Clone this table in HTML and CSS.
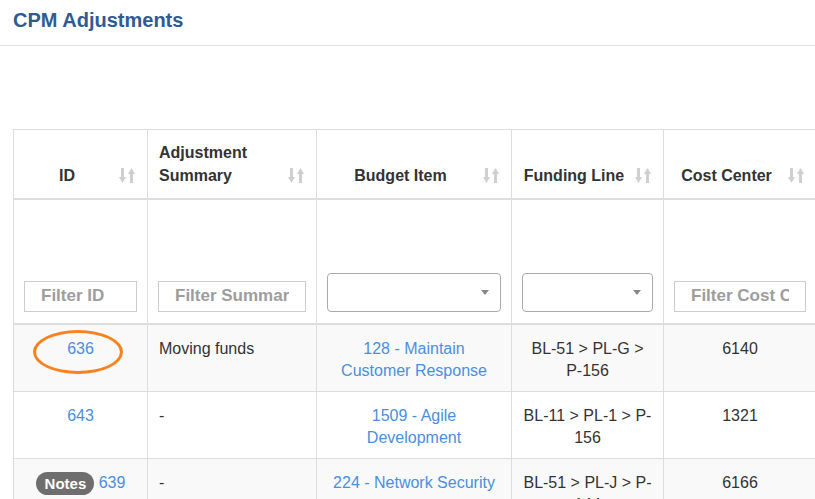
FILE: index.html
```html
<!DOCTYPE html>
<html lang="en">
<head>
  <meta charset="UTF-8">
  <meta name="viewport" content="width=device-width, initial-scale=1.0">
  <title>CPM Adjustments</title>
  <link rel="stylesheet" href="styles.css">
</head>
<body>
  <div class="page-header">
    <h1>CPM Adjustments</h1>
  </div>

  <table class="grid">
    <colgroup>
      <col class="col-id">
      <col class="col-summary">
      <col class="col-budget">
      <col class="col-funding">
      <col class="col-cost">
    </colgroup>
    <thead>
      <tr class="head-row">
        <th>
          <div class="th-inner"><span class="th-label">ID</span>
            <svg class="sort" viewBox="0 0 16 17" width="16" height="17"><rect x="2" y="1" width="3" height="10"/><polygon points="0,10 7,10 3.5,16"/><polygon points="9,7 16,7 12.5,1"/><rect x="11" y="6" width="3" height="10"/></svg>
          </div>
        </th>
        <th>
          <div class="th-inner"><span class="th-label left">Adjustment Summary</span>
            <svg class="sort" viewBox="0 0 16 17" width="16" height="17"><rect x="2" y="1" width="3" height="10"/><polygon points="0,10 7,10 3.5,16"/><polygon points="9,7 16,7 12.5,1"/><rect x="11" y="6" width="3" height="10"/></svg>
          </div>
        </th>
        <th>
          <div class="th-inner"><span class="th-label">Budget Item</span>
            <svg class="sort" viewBox="0 0 16 17" width="16" height="17"><rect x="2" y="1" width="3" height="10"/><polygon points="0,10 7,10 3.5,16"/><polygon points="9,7 16,7 12.5,1"/><rect x="11" y="6" width="3" height="10"/></svg>
          </div>
        </th>
        <th>
          <div class="th-inner"><span class="th-label">Funding Line</span>
            <svg class="sort" viewBox="0 0 16 17" width="16" height="17"><rect x="2" y="1" width="3" height="10"/><polygon points="0,10 7,10 3.5,16"/><polygon points="9,7 16,7 12.5,1"/><rect x="11" y="6" width="3" height="10"/></svg>
          </div>
        </th>
        <th>
          <div class="th-inner"><span class="th-label">Cost Center</span>
            <svg class="sort" viewBox="0 0 16 17" width="16" height="17"><rect x="2" y="1" width="3" height="10"/><polygon points="0,10 7,10 3.5,16"/><polygon points="9,7 16,7 12.5,1"/><rect x="11" y="6" width="3" height="10"/></svg>
          </div>
        </th>
      </tr>
      <tr class="filter-row">
        <td><input class="filter-input" type="text" placeholder="Filter ID"></td>
        <td><input class="filter-input" type="text" placeholder="Filter Summary"></td>
        <td>
          <div class="select-box">
            <svg viewBox="0 0 8 5" width="8" height="5"><polygon points="0,0 8,0 4,5"/></svg>
          </div>
        </td>
        <td>
          <div class="select-box">
            <svg viewBox="0 0 8 5" width="8" height="5"><polygon points="0,0 8,0 4,5"/></svg>
          </div>
        </td>
        <td><input class="filter-input" type="text" placeholder="Filter Cost Center"></td>
      </tr>
    </thead>
    <tbody>
      <tr>
        <td class="center"><a href="#" class="circled">636</a></td>
        <td>Moving funds</td>
        <td class="center"><a href="#">128 - Maintain Customer Response</a></td>
        <td class="center">BL-51 &gt; PL-G &gt; P-156</td>
        <td class="center">6140</td>
      </tr>
      <tr>
        <td class="center"><a href="#">643</a></td>
        <td>-</td>
        <td class="center"><a href="#">1509 - Agile Development</a></td>
        <td class="center">BL-11 &gt; PL-1 &gt; P-156</td>
        <td class="center">1321</td>
      </tr>
      <tr>
        <td class="center"><span class="badge">Notes</span> <a href="#">639</a></td>
        <td>-</td>
        <td class="center"><a href="#">224 - Network Security</a></td>
        <td class="center">BL-51 &gt; PL-J &gt; P-144</td>
        <td class="center">6166</td>
      </tr>
    </tbody>
  </table>
</body>
</html>
```

FILE: styles.css
```css
body {
  margin: 0;
  font-family: 'Liberation Sans', Arial, sans-serif;
  font-size: 16px;
  color: #333;
  background: #fff;
  overflow: hidden;
}
.page-header {
  padding: 6px 13px 11px;
  border-bottom: 1px solid #ddd;
}
.page-header h1 {
  margin: 0;
  font-size: 20px;
  line-height: 28px;
  font-weight: bold;
  color: #2f5b91;
}
.grid {
  margin: 83px 0 0 13px;
  width: 803px;
  table-layout: fixed;
  border-collapse: collapse;
  border: 1px solid #ddd;
}
.col-id { width: 134px; }
.col-summary { width: 169px; }
.col-budget { width: 195px; }
.col-funding { width: 152px; }
.col-cost { width: 153px; }
.grid th, .grid td {
  border: 1px solid #ddd;
  line-height: 22px;
}
.head-row th {
  height: 69px;
  padding: 0 12px 11px 11px;
  vertical-align: bottom;
  font-weight: bold;
  box-sizing: border-box;
  border-bottom: 2px solid #ddd;
}
.th-inner {
  display: flex;
  align-items: flex-end;
  gap: 10px;
}
.th-label {
  flex: 1;
  text-align: center;
  line-height: 23px;
}
.th-label.left {
  text-align: left;
}
.sort {
  fill: #cfcfcf;
  flex: none;
  margin-bottom: 3px;
}
.filter-row td {
  height: 125px;
  padding: 0 10px 11px;
  vertical-align: bottom;
  border-bottom: 2px solid #ddd;
  box-sizing: border-box;
}
.filter-input {
  display: block;
  width: 100%;
  box-sizing: border-box;
  height: 31px;
  padding: 0 16px;
  border: 1px solid #ccc;
  font-family: 'Liberation Sans', Arial, sans-serif;
  font-size: 17px;
  font-weight: bold;
  color: #555;
  outline: none;
}
.filter-input::placeholder {
  color: #9d9d9d;
  font-weight: bold;
}
.select-box {
  height: 39px;
  box-sizing: border-box;
  border: 1px solid #aaa;
  border-radius: 4px;
  display: flex;
  justify-content: flex-end;
  align-items: center;
  padding-right: 11px;
}
.select-box svg {
  fill: #888;
}
tbody td {
  padding: 13px 11px 9px;
  vertical-align: top;
}
tbody tr:nth-child(odd) {
  background: #f9f9f9;
}
.center {
  text-align: center;
}
a {
  color: #4a8fdf;
  text-decoration: none;
}
.circled {
  position: relative;
}
.circled::after {
  content: "";
  position: absolute;
  left: -34px;
  top: -10px;
  width: 90px;
  height: 44px;
  box-sizing: border-box;
  border: 3px solid #f7821f;
  border-radius: 50%;
}
.badge {
  display: inline-block;
  background: #6e6e6e;
  color: #fff;
  font-weight: bold;
  font-size: 15px;
  line-height: 23px;
  padding: 0 8px 0 9px;
  border-radius: 12px;
  vertical-align: middle;
}
```
